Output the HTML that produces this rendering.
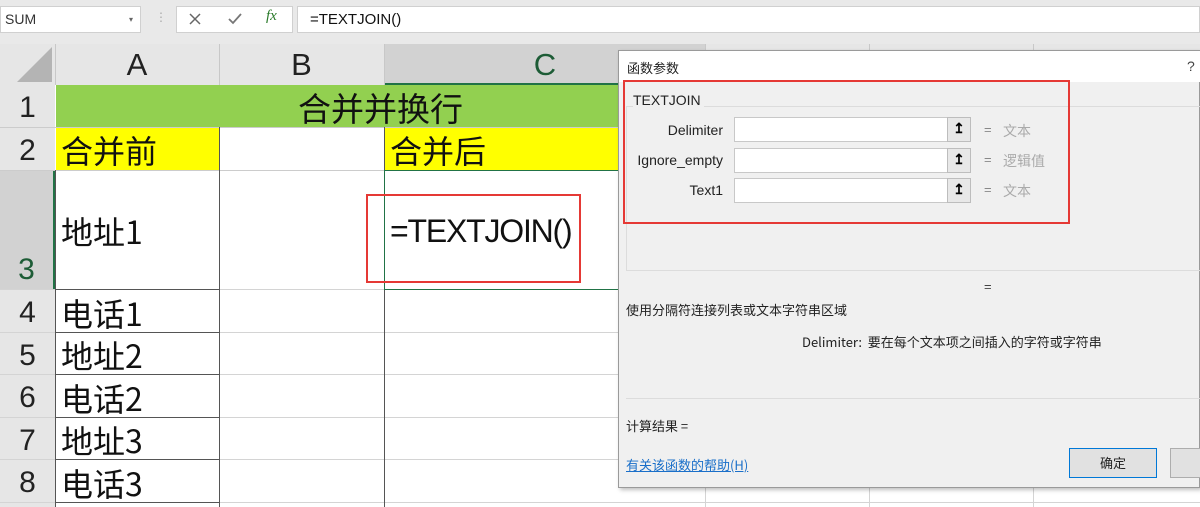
<!DOCTYPE html>
<html><head><meta charset="utf-8"><style>
*{margin:0;padding:0;box-sizing:border-box}
body{width:1200px;height:507px;overflow:hidden;background:#fff;font-family:"Liberation Sans","Noto Sans CJK SC",sans-serif;position:relative}
.a{position:absolute}
.hl{position:absolute;height:1px;background:#d4d4d4}
.vl{position:absolute;width:1px;background:#d4d4d4}
.rn{position:absolute;left:0;width:55px;text-align:center;font-size:30px;color:#222;background:#e6e6e6}
.ct{position:absolute;font-size:32px;color:#111;font-family:"Noto Sans CJK SC",sans-serif;line-height:1}
.dl{font-size:13px;color:#222;font-family:"Noto Sans CJK SC","Liberation Sans",sans-serif}
.inp{position:absolute;left:734px;width:214px;height:25px;background:#fff;border:1px solid #c8c8c8}
.btn{position:absolute;left:947px;width:24px;height:25px;background:#e8e8e8;border:1px solid #bdbdbd;text-align:center;font-size:14px;line-height:20px;font-weight:bold}
.lab{position:absolute;text-align:right;width:100px;left:623px;font-size:14px;color:#222}
.eq{position:absolute;left:984px;font-size:13px;color:#888}
.val{position:absolute;left:1003px;font-size:14px;color:#aaa;font-family:"Noto Sans CJK SC",sans-serif}
</style></head><body>
<div class="a" style="left:0;top:0;width:1200px;height:44px;background:#e9e9e9"></div>
<div class="a" style="left:0;top:6px;width:141px;height:27px;background:#fff;border:1px solid #d0d0d0;font-size:14px;line-height:25px;padding-left:4px;color:#333">SUM<span style="position:absolute;left:128px;font-size:8px;color:#666">▾</span></div>
<div class="a" style="left:155px;top:10px;font-size:12px;color:#aaa">⋮</div>
<div class="a" style="left:176px;top:6px;width:117px;height:27px;background:#fff;border:1px solid #d0d0d0"></div>
<svg class="a" style="left:188px;top:12px" width="14" height="14"><path d="M2 2L12 12M12 2L2 12" stroke="#666" stroke-width="1.5"/></svg>
<svg class="a" style="left:227px;top:12px" width="16" height="14"><path d="M2 7L6 11L14 2" stroke="#777" stroke-width="1.8" fill="none"/></svg>
<div class="a" style="left:266px;top:8px;font-size:15px;color:#2a7a2a;font-style:italic;font-family:'Liberation Serif',serif">fx</div>
<div class="a" style="left:297px;top:6px;width:903px;height:27px;background:#fff;border:1px solid #d0d0d0;font-size:15px;line-height:25px;padding-left:12px;color:#111">=TEXTJOIN()</div>
<div class="a" style="left:0;top:44px;width:1200px;height:41px;background:#e6e6e6"></div>
<svg class="a" style="left:16px;top:47px" width="38" height="36"><polygon points="36,0 36,35 1,35" fill="#b4b4b4"/></svg>
<div class="a" style="left:384px;top:44px;width:322px;height:41px;background:#d2d2d2;border-bottom:2px solid #217346"></div>
<div class="a" style="left:55px;top:47px;width:164px;text-align:center;font-size:31px;color:#222">A</div>
<div class="a" style="left:219px;top:47px;width:165px;text-align:center;font-size:31px;color:#222">B</div>
<div class="a" style="left:384px;top:47px;width:322px;text-align:center;font-size:31px;color:#1d5c36">C</div>
<div class="vl" style="left:55px;top:44px;height:41px;background:#c8c8c8"></div>
<div class="vl" style="left:219px;top:44px;height:41px;background:#c8c8c8"></div>
<div class="vl" style="left:384px;top:44px;height:41px;background:#c8c8c8"></div>
<div class="rn" style="top:85px;height:42px;line-height:46px">1</div>
<div class="rn" style="top:127px;height:43px;line-height:48px">2</div>
<div class="rn" style="top:170px;height:119px;background:#d2d2d2;color:#1d5c36;border-right:2px solid #217346;line-height:200px">3</div>
<div class="rn" style="top:289px;height:43px;line-height:48px">4</div>
<div class="rn" style="top:332px;height:42px;line-height:48px">5</div>
<div class="rn" style="top:374px;height:43px;line-height:48px">6</div>
<div class="rn" style="top:417px;height:42px;line-height:48px">7</div>
<div class="rn" style="top:459px;height:43px;line-height:48px">8</div>
<div class="rn" style="top:502px;height:5px"></div>
<div class="a" style="left:56px;top:85px;width:1144px;height:42px;background:#92d050"></div>
<div class="a" style="left:56px;top:127px;width:163px;height:43px;background:#ffff00"></div>
<div class="a" style="left:384px;top:127px;width:322px;height:43px;background:#ffff00"></div>
<div class="hl" style="left:0;top:127px;width:1200px;background:#ccc"></div>
<div class="hl" style="left:0;top:170px;width:1200px;background:#ccc"></div>
<div class="hl" style="left:0;top:289px;width:1200px"></div>
<div class="hl" style="left:0;top:332px;width:1200px"></div>
<div class="hl" style="left:0;top:374px;width:1200px"></div>
<div class="hl" style="left:0;top:417px;width:1200px"></div>
<div class="hl" style="left:0;top:459px;width:1200px"></div>
<div class="hl" style="left:0;top:502px;width:1200px"></div>
<div class="vl" style="left:219px;top:127px;height:380px;background:#555"></div>
<div class="vl" style="left:384px;top:127px;height:380px;background:#555"></div>
<div class="vl" style="left:55px;top:170px;height:337px;background:#555"></div>
<div class="hl" style="left:55px;top:289px;width:164px;background:#555"></div>
<div class="hl" style="left:55px;top:332px;width:164px;background:#555"></div>
<div class="hl" style="left:55px;top:374px;width:164px;background:#555"></div>
<div class="hl" style="left:55px;top:417px;width:164px;background:#555"></div>
<div class="hl" style="left:55px;top:459px;width:164px;background:#555"></div>
<div class="hl" style="left:55px;top:502px;width:164px;background:#555"></div>
<div class="a" style="left:384px;top:170px;width:322px;height:120px;border:1px solid #217346"></div>
<div class="vl" style="left:705px;top:488px;height:19px"></div>
<div class="vl" style="left:869px;top:488px;height:19px"></div>
<div class="vl" style="left:1033px;top:488px;height:19px"></div>
<div class="vl" style="left:705px;top:44px;height:6px;background:#c8c8c8"></div>
<div class="vl" style="left:869px;top:44px;height:6px;background:#c8c8c8"></div>
<div class="vl" style="left:1033px;top:44px;height:6px;background:#c8c8c8"></div>
<div class="ct" style="left:298px;top:91px;font-size:33px">合并并换行</div>
<div class="ct" style="left:61px;top:134px">合并前</div>
<div class="ct" style="left:390px;top:134px">合并后</div>
<div class="ct" style="left:61px;top:215px">地址1</div>
<div class="ct" style="left:61px;top:297px">电话1</div>
<div class="ct" style="left:61px;top:339px">地址2</div>
<div class="ct" style="left:61px;top:382px">电话2</div>
<div class="ct" style="left:61px;top:424px">地址3</div>
<div class="ct" style="left:61px;top:467px">电话3</div>
<div class="a" style="left:390px;top:213px;font-size:32px;color:#111;font-family:'Liberation Sans',sans-serif;letter-spacing:-1.2px">=TEXTJOIN()</div>
<div class="a" style="left:366px;top:194px;width:215px;height:89px;border:2px solid #e53935"></div>
<div class="a" style="left:618px;top:50px;width:582px;height:438px;background:#f0f0f0;border:1px solid #9a9a9a;box-shadow:2px 2px 4px rgba(0,0,0,.25)"></div>
<div class="a" style="left:619px;top:51px;width:581px;height:31px;background:#fff"></div>
<div class="a dl" style="left:627px;top:58px">函数参数</div>
<div class="a" style="left:1187px;top:58px;font-size:14px;color:#444">?</div>
<div class="a" style="left:626px;top:106px;width:574px;height:165px;border:1px solid #dcdcdc;border-right:none"></div>
<div class="a" style="left:633px;top:92px;font-size:14px;color:#222;background:#f0f0f0;padding-right:3px">TEXTJOIN</div>
<div class="lab" style="top:122px">Delimiter</div>
<div class="lab" style="top:152px">Ignore_empty</div>
<div class="lab" style="top:182px">Text1</div>
<div class="inp" style="top:117px"></div><div class="btn" style="top:117px">↥</div>
<div class="inp" style="top:148px"></div><div class="btn" style="top:148px">↥</div>
<div class="inp" style="top:178px"></div><div class="btn" style="top:178px">↥</div>
<div class="eq" style="top:122px">=</div><div class="val" style="top:121px">文本</div>
<div class="eq" style="top:152px">=</div><div class="val" style="top:151px">逻辑值</div>
<div class="eq" style="top:182px">=</div><div class="val" style="top:181px">文本</div>
<div class="a" style="left:623px;top:80px;width:447px;height:144px;border:2px solid #e53935"></div>
<div class="a" style="left:984px;top:279px;font-size:13px;color:#444">=</div>
<div class="a dl" style="left:626px;top:300px">使用分隔符连接列表或文本字符串区域</div>
<div class="a dl" style="left:802px;top:332px">Delimiter:&nbsp;&nbsp;要在每个文本项之间插入的字符或字符串</div>
<div class="hl" style="left:626px;top:398px;width:574px;background:#dcdcdc"></div>
<div class="a dl" style="left:626px;top:416px">计算结果 =</div>
<div class="a dl" style="left:626px;top:455px;color:#1a6fc9;text-decoration:underline">有关该函数的帮助(H)</div>
<div class="a dl" style="left:1069px;top:448px;width:88px;height:30px;background:#e1e1e1;border:1px solid #0078d7;text-align:center;line-height:28px">确定</div>
<div class="a" style="left:1170px;top:448px;width:40px;height:30px;background:#e1e1e1;border:1px solid #adadad"></div>
</body></html>
